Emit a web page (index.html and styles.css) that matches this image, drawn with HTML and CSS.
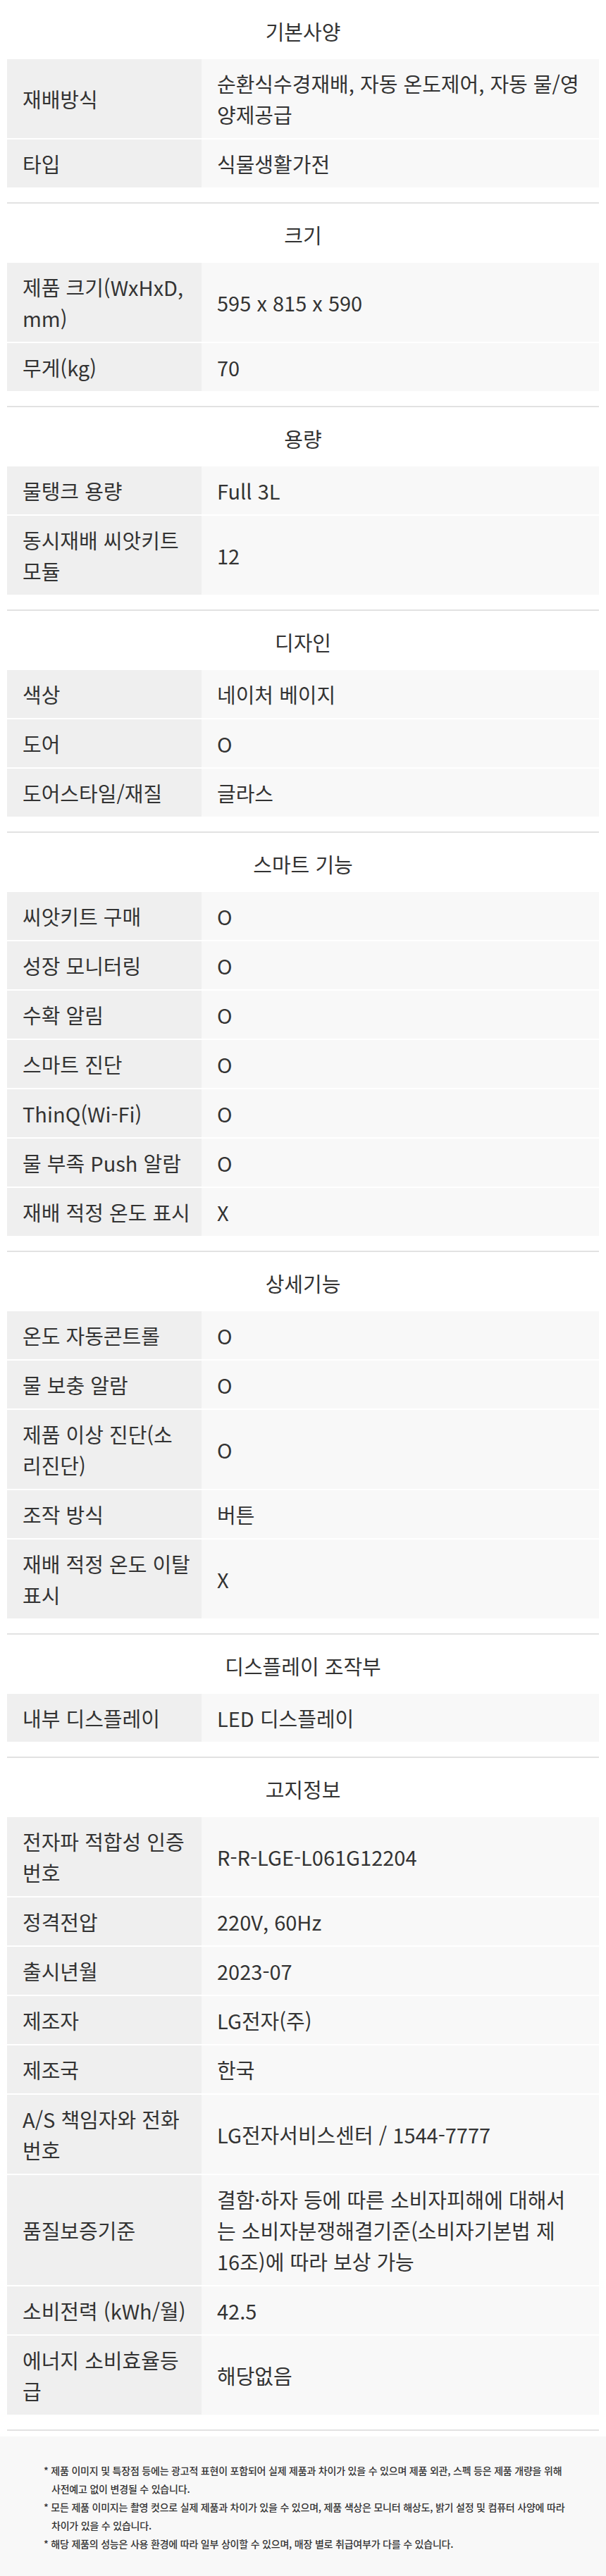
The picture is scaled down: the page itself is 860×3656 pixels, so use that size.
FILE: index.html
```html
<!DOCTYPE html>
<html lang="ko">
	<head>
		<meta charset="UTF-8">
		<title>제품 사양</title>
		<link rel="stylesheet" href="styles.css">
	</head>
	<body>
		<div class="spec">
			<!-- 기본사양 -->
			<section class="spec-group">
				<h3 class="spec-title">기본사양</h3>
				<div class="spec-list">
					<div class="spec-row"><div class="spec-label">재배방식</div><div class="spec-value">순환식수경재배, 자동 온도제어, 자동 물/영양제공급</div></div>
					<div class="spec-row"><div class="spec-label">타입</div><div class="spec-value">식물생활가전</div></div>
				</div>
			</section>

			<!-- 크기 -->
			<section class="spec-group">
				<h3 class="spec-title">크기</h3>
				<div class="spec-list">
					<div class="spec-row"><div class="spec-label">제품 크기(WxHxD, mm)</div><div class="spec-value">595 x 815 x 590</div></div>
					<div class="spec-row"><div class="spec-label">무게(kg)</div><div class="spec-value">70</div></div>
				</div>
			</section>

			<!-- 용량 -->
			<section class="spec-group">
				<h3 class="spec-title">용량</h3>
				<div class="spec-list">
					<div class="spec-row"><div class="spec-label">물탱크 용량</div><div class="spec-value">Full 3L</div></div>
					<div class="spec-row"><div class="spec-label">동시재배 씨앗키트 모듈</div><div class="spec-value">12</div></div>
				</div>
			</section>

			<!-- 디자인 -->
			<section class="spec-group">
				<h3 class="spec-title">디자인</h3>
				<div class="spec-list">
					<div class="spec-row"><div class="spec-label">색상</div><div class="spec-value">네이처 베이지</div></div>
					<div class="spec-row"><div class="spec-label">도어</div><div class="spec-value">O</div></div>
					<div class="spec-row"><div class="spec-label">도어스타일/재질</div><div class="spec-value">글라스</div></div>
				</div>
			</section>

			<!-- 스마트 기능 -->
			<section class="spec-group">
				<h3 class="spec-title">스마트 기능</h3>
				<div class="spec-list">
					<div class="spec-row"><div class="spec-label">씨앗키트 구매</div><div class="spec-value">O</div></div>
					<div class="spec-row"><div class="spec-label">성장 모니터링</div><div class="spec-value">O</div></div>
					<div class="spec-row"><div class="spec-label">수확 알림</div><div class="spec-value">O</div></div>
					<div class="spec-row"><div class="spec-label">스마트 진단</div><div class="spec-value">O</div></div>
					<div class="spec-row"><div class="spec-label">ThinQ(Wi-Fi)</div><div class="spec-value">O</div></div>
					<div class="spec-row"><div class="spec-label">물 부족 Push 알람</div><div class="spec-value">O</div></div>
					<div class="spec-row"><div class="spec-label">재배 적정 온도 표시</div><div class="spec-value">X</div></div>
				</div>
			</section>

			<!-- 상세기능 -->
			<section class="spec-group">
				<h3 class="spec-title">상세기능</h3>
				<div class="spec-list">
					<div class="spec-row"><div class="spec-label">온도 자동콘트롤</div><div class="spec-value">O</div></div>
					<div class="spec-row"><div class="spec-label">물 보충 알람</div><div class="spec-value">O</div></div>
					<div class="spec-row"><div class="spec-label">제품 이상 진단(소리진단)</div><div class="spec-value">O</div></div>
					<div class="spec-row"><div class="spec-label">조작 방식</div><div class="spec-value">버튼</div></div>
					<div class="spec-row"><div class="spec-label">재배 적정 온도 이탈 표시</div><div class="spec-value">X</div></div>
				</div>
			</section>

			<!-- 디스플레이 조작부 -->
			<section class="spec-group">
				<h3 class="spec-title">디스플레이 조작부</h3>
				<div class="spec-list">
					<div class="spec-row"><div class="spec-label">내부 디스플레이</div><div class="spec-value">LED 디스플레이</div></div>
				</div>
			</section>

			<!-- 고지정보 -->
			<section class="spec-group">
				<h3 class="spec-title">고지정보</h3>
				<div class="spec-list">
					<div class="spec-row"><div class="spec-label">전자파 적합성 인증 번호</div><div class="spec-value">R-R-LGE-L061G12204</div></div>
					<div class="spec-row"><div class="spec-label">정격전압</div><div class="spec-value">220V, 60Hz</div></div>
					<div class="spec-row"><div class="spec-label">출시년월</div><div class="spec-value">2023-07</div></div>
					<div class="spec-row"><div class="spec-label">제조자</div><div class="spec-value">LG전자(주)</div></div>
					<div class="spec-row"><div class="spec-label">제조국</div><div class="spec-value">한국</div></div>
					<div class="spec-row"><div class="spec-label">A/S 책임자와 전화 번호</div><div class="spec-value">LG전자서비스센터 / 1544-7777</div></div>
					<div class="spec-row"><div class="spec-label">품질보증기준</div><div class="spec-value">결함·하자 등에 따른 소비자피해에 대해서는 소비자분쟁해결기준(소비자기본법 제 16조)에 따라 보상 가능</div></div>
					<div class="spec-row"><div class="spec-label">소비전력 (kWh/월)</div><div class="spec-value">42.5</div></div>
					<div class="spec-row"><div class="spec-label">에너지 소비효율등급</div><div class="spec-value">해당없음</div></div>
				</div>
			</section>
		</div>

		<!-- 하단 안내문 -->
		<div class="notice">
			<ul class="notice-list">
				<li>* 제품 이미지 및 특장점 등에는 광고적 표현이 포함되어 실제 제품과 차이가 있을 수 있으며 제품 외관, 스펙 등은 제품 개량을 위해 사전예고 없이 변경될 수 있습니다.</li>
				<li>* 모든 제품 이미지는 촬영 컷으로 실제 제품과 차이가 있을 수 있으며, 제품 색상은 모니터 해상도, 밝기 설정 및 컴퓨터 사양에 따라 차이가 있을 수 있습니다.</li>
				<li>* 해당 제품의 성능은 사용 환경에 따라 일부 상이할 수 있으며, 매장 별로 취급여부가 다를 수 있습니다.</li>
			</ul>
		</div>
	</body>
</html>
```

FILE: styles.css
```css
*{
	margin: 0;
	padding: 0;
	box-sizing: border-box;
}
ul{
	list-style: none;
}
body{
	font-family: "Noto Sans CJK KR", "Noto Sans", sans-serif;
	color: #333;
	background: #fff;
}

/* 사양 전체 */
.spec{
	padding: 0 10px;
}
.spec-group{
	padding-bottom: 21px;
	border-bottom: 2px solid #e2e2e2;
}
.spec-title{
	font-size: 29px;
	font-weight: 400;
	line-height: 44px;
	padding: 22px 0 18px;
	text-align: center;
	color: #333;
}

/* 표 */
.spec-list{
	display: flex;
	flex-direction: column;
	gap: 2px;
}
.spec-row{
	display: grid;
	grid-template-columns: 276px 1fr;
	font-size: 29px;
	line-height: 44px;
}
.spec-label{
	background-color: #efefef;
	padding: 12px 16px 12px 22px; /* 글자 영역 238px */
	display: flex;
	align-items: center;
}
.spec-value{
	background-color: #f8f8f8;
	padding: 12px 26px 12px 22px; /* 글자 영역 516px */
	display: flex;
	align-items: center;
}

/* 하단 안내 */
.notice{
	margin-top: 8px;
	background-color: #f8f8f8;
	padding: 35px 52px 35px 62px;
}
.notice-list li{
	font-size: 14px;
	font-weight: 500;
	line-height: 26px;
	letter-spacing: -0.2px;
	padding-left: 11px;
	text-indent: -11px;
	color: #333;
}
```
